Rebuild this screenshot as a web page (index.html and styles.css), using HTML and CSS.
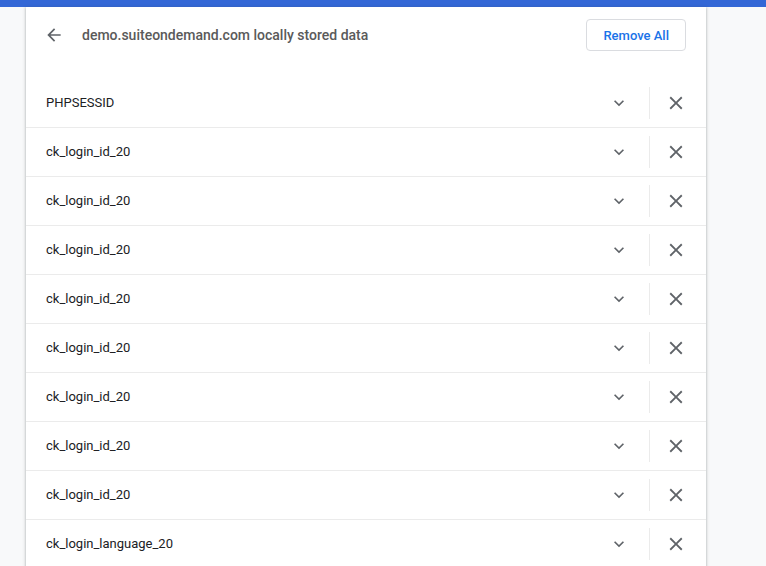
FILE: index.html
```html
<!DOCTYPE html>
<html>
<head>
<meta charset="utf-8">
<link rel="stylesheet" href="styles.css">
</head>
<body>
<div class="topbar"></div>
<div class="card">
  <div class="header">
    <button class="icon-btn back" aria-label="Back">
      <svg viewBox="0 0 24 24" width="20" height="20"><path d="M20 11H7.83l5.59-5.59L12 4l-8 8 8 8 1.41-1.41L7.83 13H20v-2z"/></svg>
    </button>
    <h1 class="title">demo.suiteondemand.com locally stored data</h1>
    <button class="remove-all">Remove All</button>
  </div>
  <div class="list">
    <div class="row"><span class="name">PHPSESSID</span><button class="icon-btn expand"><svg viewBox="0 0 24 24" width="20" height="20"><path d="M16.59 8.59L12 13.17 7.41 8.59 6 10l6 6 6-6z"/></svg></button><span class="sep"></span><button class="icon-btn close"><svg viewBox="0 0 24 24" width="22" height="22"><path d="M19 6.41L17.59 5 12 10.59 6.41 5 5 6.41 10.59 12 5 17.59 6.41 19 12 13.41 17.59 19 19 17.59 13.41 12z"/></svg></button></div>
    <div class="row"><span class="name">ck_login_id_20</span><button class="icon-btn expand"><svg viewBox="0 0 24 24" width="20" height="20"><path d="M16.59 8.59L12 13.17 7.41 8.59 6 10l6 6 6-6z"/></svg></button><span class="sep"></span><button class="icon-btn close"><svg viewBox="0 0 24 24" width="22" height="22"><path d="M19 6.41L17.59 5 12 10.59 6.41 5 5 6.41 10.59 12 5 17.59 6.41 19 12 13.41 17.59 19 19 17.59 13.41 12z"/></svg></button></div>
    <div class="row"><span class="name">ck_login_id_20</span><button class="icon-btn expand"><svg viewBox="0 0 24 24" width="20" height="20"><path d="M16.59 8.59L12 13.17 7.41 8.59 6 10l6 6 6-6z"/></svg></button><span class="sep"></span><button class="icon-btn close"><svg viewBox="0 0 24 24" width="22" height="22"><path d="M19 6.41L17.59 5 12 10.59 6.41 5 5 6.41 10.59 12 5 17.59 6.41 19 12 13.41 17.59 19 19 17.59 13.41 12z"/></svg></button></div>
    <div class="row"><span class="name">ck_login_id_20</span><button class="icon-btn expand"><svg viewBox="0 0 24 24" width="20" height="20"><path d="M16.59 8.59L12 13.17 7.41 8.59 6 10l6 6 6-6z"/></svg></button><span class="sep"></span><button class="icon-btn close"><svg viewBox="0 0 24 24" width="22" height="22"><path d="M19 6.41L17.59 5 12 10.59 6.41 5 5 6.41 10.59 12 5 17.59 6.41 19 12 13.41 17.59 19 19 17.59 13.41 12z"/></svg></button></div>
    <div class="row"><span class="name">ck_login_id_20</span><button class="icon-btn expand"><svg viewBox="0 0 24 24" width="20" height="20"><path d="M16.59 8.59L12 13.17 7.41 8.59 6 10l6 6 6-6z"/></svg></button><span class="sep"></span><button class="icon-btn close"><svg viewBox="0 0 24 24" width="22" height="22"><path d="M19 6.41L17.59 5 12 10.59 6.41 5 5 6.41 10.59 12 5 17.59 6.41 19 12 13.41 17.59 19 19 17.59 13.41 12z"/></svg></button></div>
    <div class="row"><span class="name">ck_login_id_20</span><button class="icon-btn expand"><svg viewBox="0 0 24 24" width="20" height="20"><path d="M16.59 8.59L12 13.17 7.41 8.59 6 10l6 6 6-6z"/></svg></button><span class="sep"></span><button class="icon-btn close"><svg viewBox="0 0 24 24" width="22" height="22"><path d="M19 6.41L17.59 5 12 10.59 6.41 5 5 6.41 10.59 12 5 17.59 6.41 19 12 13.41 17.59 19 19 17.59 13.41 12z"/></svg></button></div>
    <div class="row"><span class="name">ck_login_id_20</span><button class="icon-btn expand"><svg viewBox="0 0 24 24" width="20" height="20"><path d="M16.59 8.59L12 13.17 7.41 8.59 6 10l6 6 6-6z"/></svg></button><span class="sep"></span><button class="icon-btn close"><svg viewBox="0 0 24 24" width="22" height="22"><path d="M19 6.41L17.59 5 12 10.59 6.41 5 5 6.41 10.59 12 5 17.59 6.41 19 12 13.41 17.59 19 19 17.59 13.41 12z"/></svg></button></div>
    <div class="row"><span class="name">ck_login_id_20</span><button class="icon-btn expand"><svg viewBox="0 0 24 24" width="20" height="20"><path d="M16.59 8.59L12 13.17 7.41 8.59 6 10l6 6 6-6z"/></svg></button><span class="sep"></span><button class="icon-btn close"><svg viewBox="0 0 24 24" width="22" height="22"><path d="M19 6.41L17.59 5 12 10.59 6.41 5 5 6.41 10.59 12 5 17.59 6.41 19 12 13.41 17.59 19 19 17.59 13.41 12z"/></svg></button></div>
    <div class="row"><span class="name">ck_login_id_20</span><button class="icon-btn expand"><svg viewBox="0 0 24 24" width="20" height="20"><path d="M16.59 8.59L12 13.17 7.41 8.59 6 10l6 6 6-6z"/></svg></button><span class="sep"></span><button class="icon-btn close"><svg viewBox="0 0 24 24" width="22" height="22"><path d="M19 6.41L17.59 5 12 10.59 6.41 5 5 6.41 10.59 12 5 17.59 6.41 19 12 13.41 17.59 19 19 17.59 13.41 12z"/></svg></button></div>
    <div class="row"><span class="name">ck_login_language_20</span><button class="icon-btn expand"><svg viewBox="0 0 24 24" width="20" height="20"><path d="M16.59 8.59L12 13.17 7.41 8.59 6 10l6 6 6-6z"/></svg></button><span class="sep"></span><button class="icon-btn close"><svg viewBox="0 0 24 24" width="22" height="22"><path d="M19 6.41L17.59 5 12 10.59 6.41 5 5 6.41 10.59 12 5 17.59 6.41 19 12 13.41 17.59 19 19 17.59 13.41 12z"/></svg></button></div>
  </div>
</div>
</body>
</html>
```
FILE: styles.css
```css
html, body {
  margin: 0;
  padding: 0;
  height: 100%;
  overflow: hidden;
}
body {
  background: #f8f9fa;
  font-family: Roboto, "Liberation Sans", sans-serif;
  font-size: 13px;
  color: #202124;
}
.topbar {
  height: 7px;
  background: #3367d6;
}
.card {
  width: 680px;
  margin-left: 26px;
  background: #fff;
  box-shadow: 0 1px 2px rgba(60,64,67,.3), 0 1px 3px 1px rgba(60,64,67,.15);
}
.header {
  height: 56px;
  display: flex;
  align-items: center;
  padding: 0 20px 0 10px;
  margin-bottom: 16px;
}
.icon-btn {
  width: 36px;
  height: 36px;
  border: none;
  background: none;
  padding: 0;
  display: flex;
  align-items: center;
  justify-content: center;
  fill: #5f6368;
  flex: none;
}
.back {
  margin-right: 10px;
}
.title {
  flex: 1;
  margin: 0;
  font-size: 14px;
  font-weight: 500;
  color: #5a5a5a;
}
.remove-all {
  height: 32px;
  padding: 0 16px;
  border: 1px solid #dadce0;
  border-radius: 4px;
  background: #fff;
  color: #1a73e8;
  font-family: Roboto, "Liberation Sans", sans-serif;
  font-size: 13px;
  font-weight: 500;
}
.row {
  height: 48px;
  display: flex;
  align-items: center;
  padding: 0 12px 0 20px;
  border-bottom: 1px solid #ebebeb;
}
.name {
  flex: 1;
  line-height: 16px;
  margin-top: -1px;
}
.expand {
  margin-right: 12px;
}
.sep {
  width: 1px;
  height: 32px;
  background: #ebebeb;
  margin-right: 8px;
}
```
